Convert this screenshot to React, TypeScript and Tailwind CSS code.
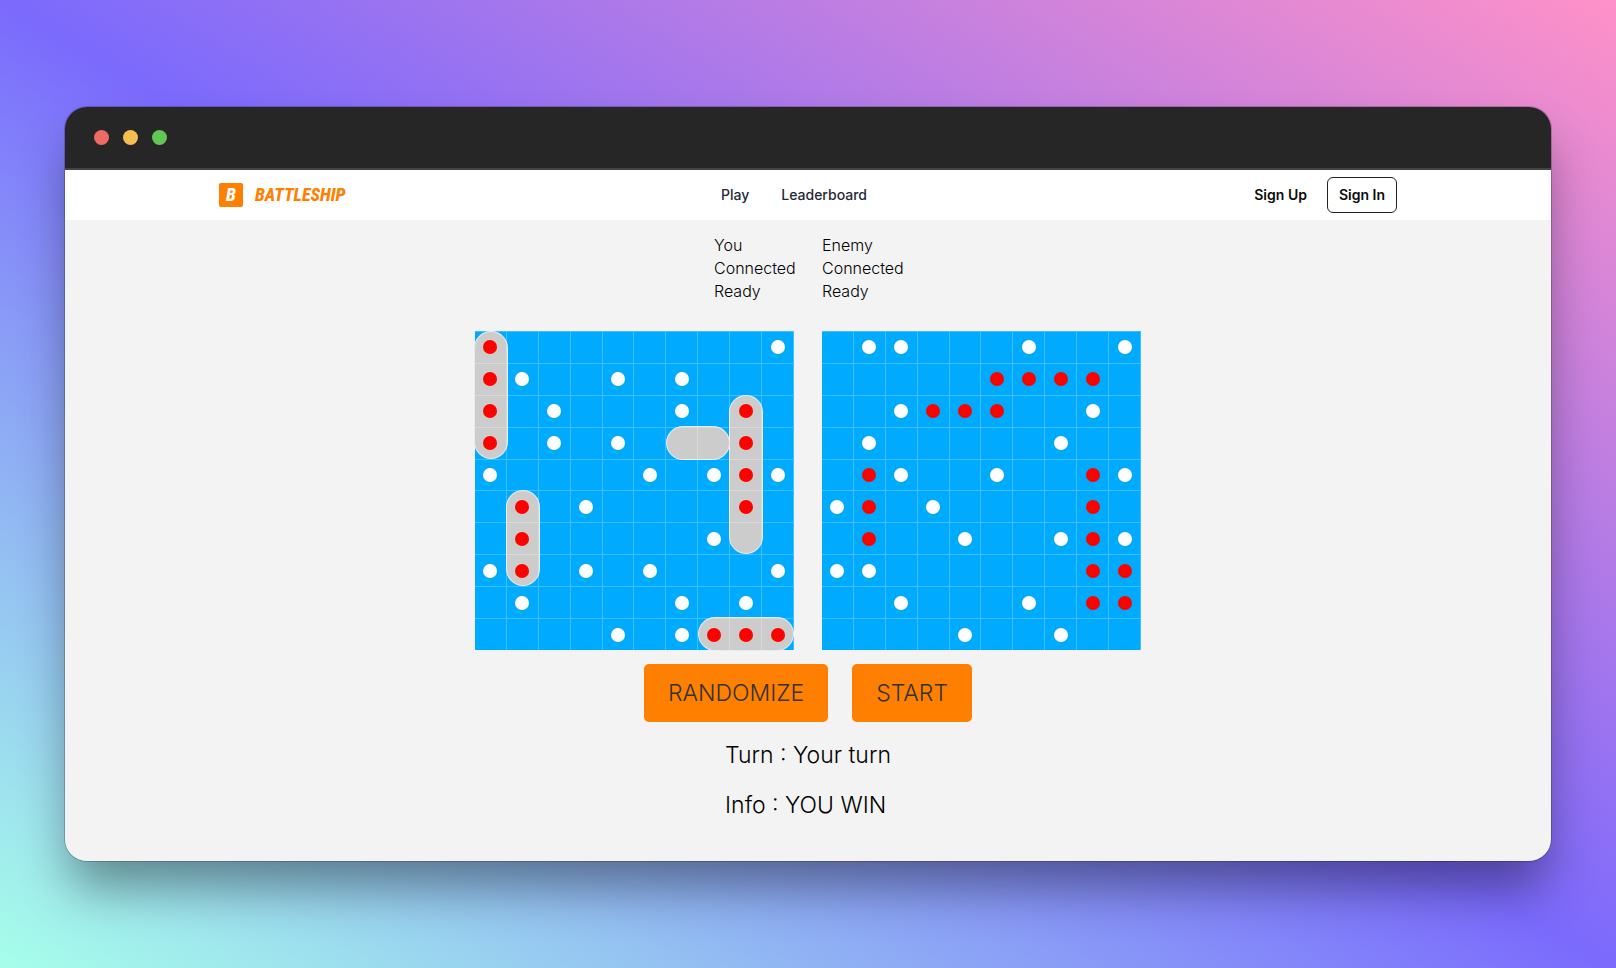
type Cell = [row: number, col: number];

interface Ship {
  row: number;
  col: number;
  rows: number;
  cols: number;
}

interface BoardProps {
  label: string;
  hits: Cell[];
  misses: Cell[];
  ships?: Ship[];
}

const SIZE = 10;

const myShips: Ship[] = [
  { row: 0, col: 0, rows: 4, cols: 1 },
  { row: 5, col: 1, rows: 3, cols: 1 },
  { row: 3, col: 6, rows: 1, cols: 2 },
  { row: 2, col: 8, rows: 5, cols: 1 },
  { row: 9, col: 7, rows: 1, cols: 3 },
];

const myHits: Cell[] = [
  [0, 0], [1, 0], [2, 0], [3, 0],
  [2, 8], [3, 8], [4, 8], [5, 8],
  [5, 1], [6, 1], [7, 1],
  [9, 7], [9, 8], [9, 9],
];

const myMisses: Cell[] = [
  [0, 9],
  [1, 1], [1, 4], [1, 6],
  [2, 2], [2, 6],
  [3, 2], [3, 4],
  [4, 0], [4, 5], [4, 7], [4, 9],
  [5, 3],
  [6, 7],
  [7, 0], [7, 3], [7, 5], [7, 9],
  [8, 1], [8, 6], [8, 8],
  [9, 4], [9, 6],
];

const enemyHits: Cell[] = [
  [1, 5], [1, 6], [1, 7], [1, 8],
  [2, 3], [2, 4], [2, 5],
  [4, 1], [5, 1], [6, 1],
  [4, 8], [5, 8], [6, 8], [7, 8], [8, 8],
  [7, 9], [8, 9],
];

const enemyMisses: Cell[] = [
  [0, 1], [0, 2], [0, 6], [0, 9],
  [2, 2], [2, 8],
  [3, 1], [3, 7],
  [4, 2], [4, 5], [4, 9],
  [5, 0], [5, 3],
  [6, 4], [6, 7], [6, 9],
  [7, 0], [7, 1],
  [8, 2], [8, 6],
  [9, 4], [9, 7],
];

const has = (cells: Cell[], row: number, col: number) =>
  cells.some(([r, c]) => r === row && c === col);

function Board({ label, hits, misses, ships = [] }: BoardProps) {
  const cells = Array.from({ length: SIZE * SIZE }, (_, i) => ({
    row: Math.floor(i / SIZE),
    col: i % SIZE,
  }));

  return (
    <div
      role="group"
      aria-label={label}
      className="grid aspect-square w-[319px] grid-cols-10 grid-rows-10 bg-[#00aaff]"
    >
      {ships.map((s) => (
        <div
          key={`ship-${s.row}-${s.col}`}
          className={`rounded-full border border-white/60 bg-[#cccccc] ${
            s.rows > s.cols ? "-mx-px" : "-my-px"
          }`}
          style={{
            gridRow: `${s.row + 1} / span ${s.rows}`,
            gridColumn: `${s.col + 1} / span ${s.cols}`,
          }}
        />
      ))}
      {cells.map(({ row, col }) => (
        <div
          key={`${row}-${col}`}
          className="z-10 flex items-center justify-center border-t border-r border-white/25"
          style={{ gridRow: row + 1, gridColumn: col + 1 }}
        >
          {has(hits, row, col) && <span className="size-3.5 rounded-full bg-[#ff0000]" />}
          {has(misses, row, col) && <span className="size-3.5 rounded-full bg-white" />}
        </div>
      ))}
    </div>
  );
}

function PlayerStatus({ name }: { name: string }) {
  return (
    <div className="w-20">
      <p>{name}</p>
      <p>Connected</p>
      <p>Ready</p>
    </div>
  );
}

function Navbar() {
  return (
    <header className="bg-white">
      <div className="mx-auto grid h-[50px] max-w-[1178px] grid-cols-[1fr_auto_1fr] items-center text-sm">
        <a
          href="#"
          className="flex items-center gap-3 font-['Roboto_Condensed','Open_Sans_Condensed','Liberation_Sans',sans-serif] text-lg font-extrabold text-[#ff8000] italic"
        >
          <span className="flex size-6 items-center justify-center rounded-xs bg-[#ff8000] text-white">
            B
          </span>
          BATTLESHIP
        </a>
        <nav className="mr-7 flex gap-8 font-medium text-[#1f2937]">
          <a href="#play">Play</a>
          <a href="#leaderboard">Leaderboard</a>
        </nav>
        <div className="flex items-center justify-end gap-5 font-semibold text-[#0b0b0b]">
          <a href="#sign-up">Sign Up</a>
          <a
            href="#sign-in"
            className="flex h-9 items-center rounded-md border border-[#222222] px-[11px]"
          >
            Sign In
          </a>
        </div>
      </div>
    </header>
  );
}

export default function App() {
  return (
    <div className="flex min-h-screen flex-col justify-center bg-[linear-gradient(to_top_right,#a6ffea,#7b6afd_50%,#ff91c8)] px-[65px] py-12 font-['Inter',sans-serif]">
      <div className="overflow-hidden rounded-[22px] shadow-[0_32px_50px_-6px_rgba(0,0,0,0.4),0_0_0_1px_rgba(0,0,0,0.2)]">
        <div className="flex h-[63px] items-center gap-3.5 border-b-2 border-[#444444] bg-[#262626] px-[29px]">
          <span className="size-[15px] rounded-full bg-[#ed6b60]" />
          <span className="size-[15px] rounded-full bg-[#f5bf50]" />
          <span className="size-[15px] rounded-full bg-[#62c655]" />
        </div>
        <Navbar />
        <main className="flex flex-col items-center bg-[#f3f3f3] pt-3.5 pb-[39px] text-black">
          <div className="flex gap-7 text-base leading-[23px] font-light">
            <PlayerStatus name="You" />
            <PlayerStatus name="Enemy" />
          </div>
          <div className="mt-7 flex flex-wrap justify-center gap-7">
            <Board label="Your board" hits={myHits} misses={myMisses} ships={myShips} />
            <Board label="Enemy board" hits={enemyHits} misses={enemyMisses} />
          </div>
          <div className="mt-3.5 flex gap-6 text-[23px] font-light text-[#333333]">
            <button type="button" className="h-[58px] rounded-[5px] bg-[#ff8000] px-6">
              RANDOMIZE
            </button>
            <button type="button" className="h-[58px] rounded-[5px] bg-[#ff8000] px-6">
              START
            </button>
          </div>
          <div className="mt-4 flex flex-col gap-4 text-[23px] leading-[34px] font-light">
            <p>Turn : Your turn</p>
            <p>Info : YOU WIN</p>
          </div>
        </main>
      </div>
    </div>
  );
}
